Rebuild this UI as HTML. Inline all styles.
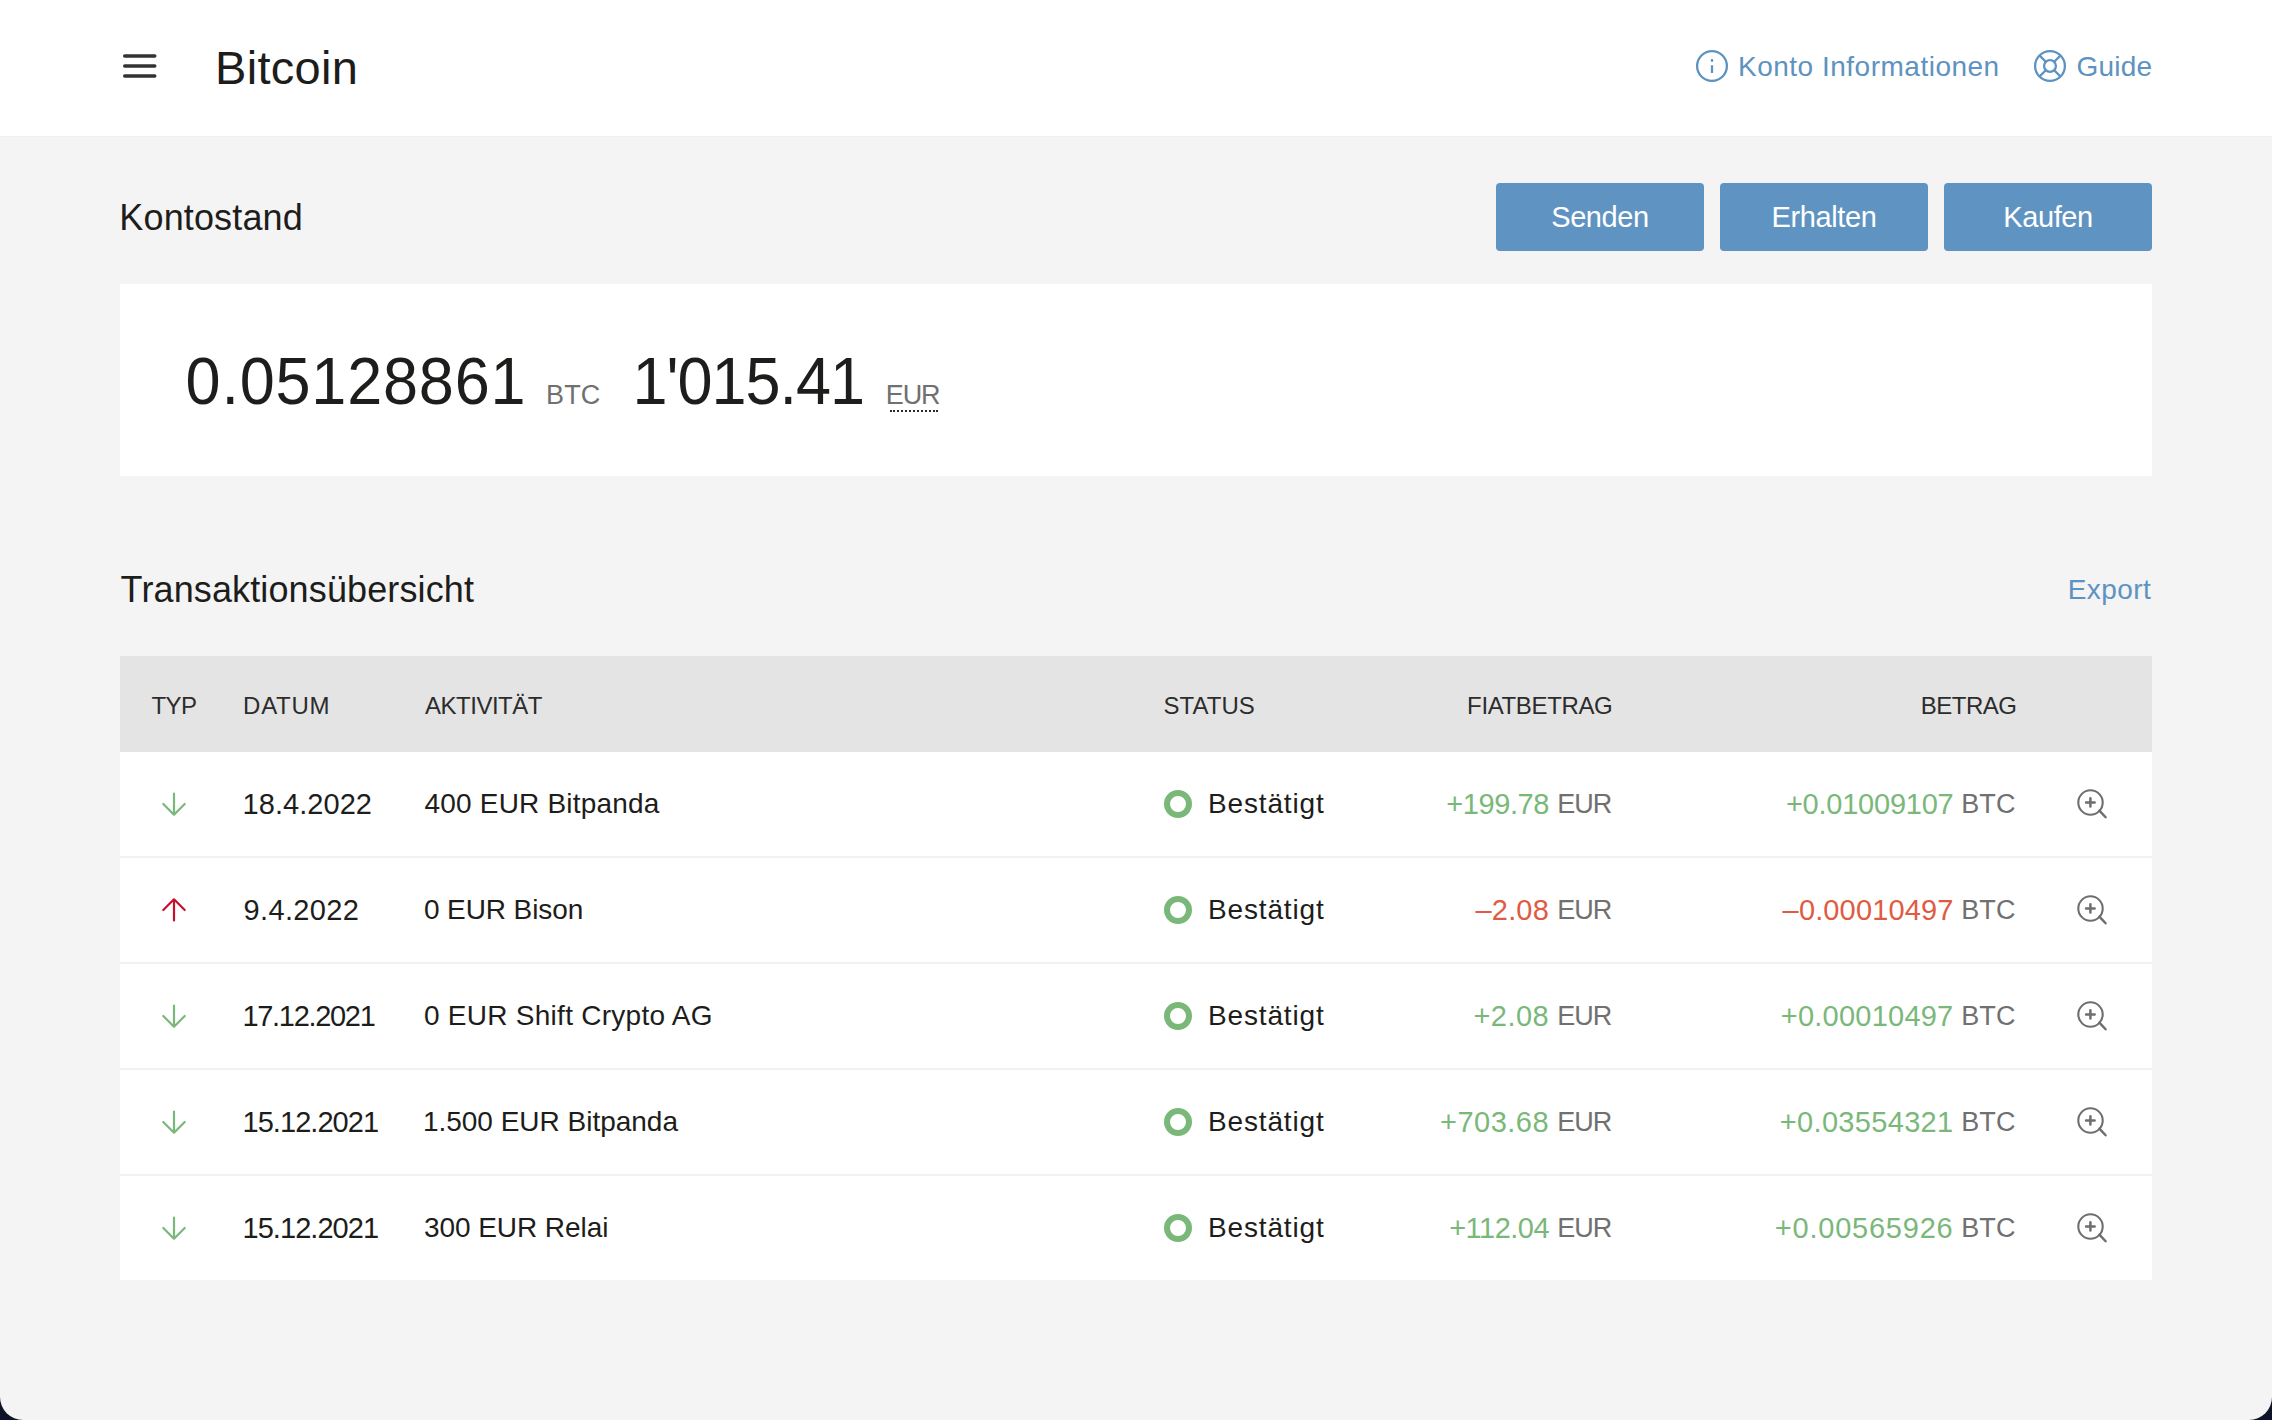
<!DOCTYPE html>
<html><head><meta charset="utf-8">
<style>
html,body{margin:0;padding:0;}
body{width:2272px;height:1420px;position:relative;overflow:hidden;background:#0e1427;font-family:"Liberation Sans",sans-serif;color:#1d1d1b;}
#win{position:absolute;left:0;top:0;width:2272px;height:1420px;background:#f4f4f4;border-radius:0 0 23px 23px;overflow:hidden;}
#hdr{position:absolute;left:0;top:0;width:2272px;height:136px;background:#fff;border-bottom:1px solid #efefef;}
.t{position:absolute;white-space:nowrap;line-height:1;}
.blue{color:#5e92c0;}
.btn{position:absolute;top:183px;width:208px;height:68px;background:#5f94c2;border-radius:4px;}
#card{position:absolute;left:120px;top:284px;width:2032px;height:192px;background:#fff;}
#thead{position:absolute;left:120px;top:656px;width:2032px;height:96px;background:#e4e4e4;}
.row{position:absolute;left:120px;width:2032px;height:104px;background:#fff;border-bottom:2px solid #f2f2f2;}
.row.last{border-bottom:none;}
.th{position:absolute;font-size:24px;color:#2c2c2c;line-height:1;white-space:nowrap;}
.cell{position:absolute;font-size:28px;line-height:1;white-space:nowrap;}
.num{position:absolute;font-size:28px;line-height:1;white-space:nowrap;}
.unit{position:absolute;font-size:27px;letter-spacing:-1px;line-height:1;white-space:nowrap;color:#707070;}
.g{color:#7ab87a;}
.r{color:#df5b43;}
</style></head><body>
<div id="win">
<div id="hdr">
<svg style="position:absolute;left:120px;top:50px" width="40" height="32" viewBox="0 0 40 32">
<g stroke="#333" stroke-width="3.4" stroke-linecap="round"><line x1="4.7" y1="6" x2="34.8" y2="6"/><line x1="4.7" y1="16" x2="34.8" y2="16"/><line x1="4.7" y1="26" x2="34.8" y2="26"/></g></svg>
<div class="t" style="left:215px;top:44px;font-size:47px;letter-spacing:0.3px;">Bitcoin</div>
<svg style="position:absolute;left:1694px;top:48px" width="36" height="36" viewBox="0 0 36 36">
<circle cx="18" cy="18" r="14.9" fill="none" stroke="#5e92c0" stroke-width="2.3"/>
<rect x="16.85" y="11.1" width="2.3" height="2.7" rx="0.6" fill="#5e92c0"/>
<rect x="16.85" y="17.2" width="2.3" height="7.7" rx="0.3" fill="#5e92c0"/></svg>
<div class="t blue" style="left:1738px;top:53px;font-size:28px;letter-spacing:0.5px;">Konto Informationen</div>
<svg style="position:absolute;left:2032px;top:48px" width="36" height="36" viewBox="0 0 36 36">
<g fill="none" stroke="#5e92c0" stroke-width="2.3"><circle cx="18" cy="18" r="14.9"/><circle cx="18" cy="18" r="5.9"/>
<path d="M7.4 7.4L13.8 13.8M28.6 7.4L22.2 13.8M7.4 28.6L13.8 22.2M28.6 28.6L22.2 22.2"/></g></svg>
<div class="t blue" style="left:2076.5px;top:53px;font-size:28px;letter-spacing:0.2px;">Guide</div>
</div>
<div class="t" style="left:119.3px;top:200px;font-size:36px;letter-spacing:0.15px;">Kontostand</div>
<div class="btn" style="left:1496px;"></div>
<div class="t" style="left:1496px;width:208px;text-align:center;top:203px;font-size:29px;color:#fff;letter-spacing:-0.4px;">Senden</div>
<div class="btn" style="left:1720px;"></div>
<div class="t" style="left:1720px;width:208px;text-align:center;top:203px;font-size:29px;color:#fff;letter-spacing:-0.4px;">Erhalten</div>
<div class="btn" style="left:1944px;"></div>
<div class="t" style="left:1944px;width:208px;text-align:center;top:203px;font-size:29px;color:#fff;letter-spacing:-0.4px;">Kaufen</div>
<div id="card"></div>
<div class="t" style="left:185.6px;top:351px;font-size:63px;letter-spacing:0.79px;transform:scaleY(1.06);transform-origin:0 53.3px;">0.05128861</div>
<div class="t" style="left:546px;top:382px;font-size:27px;letter-spacing:0.15px;color:#707070;">BTC</div>
<div class="t" style="left:632.4px;top:351px;font-size:63px;letter-spacing:-1.03px;transform:scaleY(1.06);transform-origin:0 53.3px;">1'015.41</div>
<div class="t" style="left:885.8px;top:382px;font-size:27px;letter-spacing:-1.1px;color:#707070;">EUR</div>
<div style="position:absolute;left:890px;top:410px;width:48px;height:0;border-top:2.5px dotted #2a2a2a;"></div>
<div class="t" style="left:120.6px;top:572px;font-size:36px;letter-spacing:0.13px;">Transaktionsübersicht</div>
<div class="t blue" style="left:2067.7px;top:576px;font-size:28px;letter-spacing:0.45px;">Export</div>
<div id="thead"></div>
<div class="th" style="left:151.5px;top:694px;letter-spacing:-0.55px;">TYP</div>
<div class="th" style="left:243.1px;top:694px;letter-spacing:0.7px;">DATUM</div>
<div class="th" style="left:425px;top:694px;letter-spacing:-0.49px;">AKTIVITÄT</div>
<div class="th" style="left:1163.5px;top:694px;letter-spacing:0.04px;">STATUS</div>
<div class="th" style="left:1467.1px;top:694px;letter-spacing:-0.36px;">FIATBETRAG</div>
<div class="th" style="left:1920.8px;top:694px;letter-spacing:-0.52px;">BETRAG</div>
<div class="row" style="top:752px"></div>
<svg style="position:absolute;left:158px;top:788px" width="32" height="32" viewBox="0 0 32 32"><path d="M16 5.5V26.5M5.3 16L16 26.7L26.7 16" fill="none" stroke="#7ab87a" stroke-width="2.2" stroke-linecap="round" stroke-linejoin="round"/></svg>
<div class="cell" style="left:242.5px;top:790px;font-size:29px;letter-spacing:0.06px">18.4.2022</div>
<div class="cell" style="left:424.5px;top:790px;letter-spacing:0.2px">400 EUR Bitpanda</div>
<svg style="position:absolute;left:1162px;top:788px" width="32" height="32" viewBox="0 0 32 32"><circle cx="16" cy="16" r="11" fill="none" stroke="#7ab87a" stroke-width="6"/></svg>
<div class="cell" style="left:1208px;top:790px;letter-spacing:0.84px">Bestätigt</div>
<div class="num g" style="right:723px;top:790px;font-size:29px;letter-spacing:-0.4px;">+199.78</div>
<div class="unit" style="left:1557.3px;top:791px;">EUR</div>
<div class="num g" style="right:318.5px;top:790px;font-size:29px;letter-spacing:-0.23px;">+0.01009107</div>
<div class="unit" style="left:1961.2px;top:791px;letter-spacing:0.15px;">BTC</div>
<svg style="position:absolute;left:2072px;top:788px" width="40" height="40" viewBox="0 0 40 40"><g fill="none" stroke="#6e6e6e" stroke-linecap="round"><circle cx="18.5" cy="14.5" r="12.2" stroke-width="2.1"/><path d="M18.4 10.15V18.55M14.05 14.4H22.65" stroke-width="2.5"/><path d="M27.4 22.6L33.6 29.3" stroke-width="2.4"/></g></svg>
<div class="row" style="top:858px"></div>
<svg style="position:absolute;left:158px;top:894px" width="32" height="32" viewBox="0 0 32 32"><path d="M16 26.5V5.5M5.3 16L16 5.3L26.7 16" fill="none" stroke="#c8102e" stroke-width="2.2" stroke-linecap="round" stroke-linejoin="round"/></svg>
<div class="cell" style="left:243.5px;top:896px;font-size:29px;letter-spacing:0.37px">9.4.2022</div>
<div class="cell" style="left:423.9px;top:896px;letter-spacing:-0.09px">0 EUR Bison</div>
<svg style="position:absolute;left:1162px;top:894px" width="32" height="32" viewBox="0 0 32 32"><circle cx="16" cy="16" r="11" fill="none" stroke="#7ab87a" stroke-width="6"/></svg>
<div class="cell" style="left:1208px;top:896px;letter-spacing:0.84px">Bestätigt</div>
<div class="num r" style="right:723px;top:896px;font-size:29px;letter-spacing:0.18px;">–2.08</div>
<div class="unit" style="left:1557.3px;top:897px;">EUR</div>
<div class="num r" style="right:318.5px;top:896px;font-size:29px;letter-spacing:0.14px;">–0.00010497</div>
<div class="unit" style="left:1961.2px;top:897px;letter-spacing:0.15px;">BTC</div>
<svg style="position:absolute;left:2072px;top:894px" width="40" height="40" viewBox="0 0 40 40"><g fill="none" stroke="#6e6e6e" stroke-linecap="round"><circle cx="18.5" cy="14.5" r="12.2" stroke-width="2.1"/><path d="M18.4 10.15V18.55M14.05 14.4H22.65" stroke-width="2.5"/><path d="M27.4 22.6L33.6 29.3" stroke-width="2.4"/></g></svg>
<div class="row" style="top:964px"></div>
<svg style="position:absolute;left:158px;top:1000px" width="32" height="32" viewBox="0 0 32 32"><path d="M16 5.5V26.5M5.3 16L16 26.7L26.7 16" fill="none" stroke="#7ab87a" stroke-width="2.2" stroke-linecap="round" stroke-linejoin="round"/></svg>
<div class="cell" style="left:242.5px;top:1002px;font-size:29px;letter-spacing:-1.32px">17.12.2021</div>
<div class="cell" style="left:423.9px;top:1002px;letter-spacing:0.275px">0 EUR Shift Crypto AG</div>
<svg style="position:absolute;left:1162px;top:1000px" width="32" height="32" viewBox="0 0 32 32"><circle cx="16" cy="16" r="11" fill="none" stroke="#7ab87a" stroke-width="6"/></svg>
<div class="cell" style="left:1208px;top:1002px;letter-spacing:0.84px">Bestätigt</div>
<div class="num g" style="right:723px;top:1002px;font-size:29px;letter-spacing:0.43px;">+2.08</div>
<div class="unit" style="left:1557.3px;top:1003px;">EUR</div>
<div class="num g" style="right:318.5px;top:1002px;font-size:29px;letter-spacing:0.24px;">+0.00010497</div>
<div class="unit" style="left:1961.2px;top:1003px;letter-spacing:0.15px;">BTC</div>
<svg style="position:absolute;left:2072px;top:1000px" width="40" height="40" viewBox="0 0 40 40"><g fill="none" stroke="#6e6e6e" stroke-linecap="round"><circle cx="18.5" cy="14.5" r="12.2" stroke-width="2.1"/><path d="M18.4 10.15V18.55M14.05 14.4H22.65" stroke-width="2.5"/><path d="M27.4 22.6L33.6 29.3" stroke-width="2.4"/></g></svg>
<div class="row" style="top:1070px"></div>
<svg style="position:absolute;left:158px;top:1106px" width="32" height="32" viewBox="0 0 32 32"><path d="M16 5.5V26.5M5.3 16L16 26.7L26.7 16" fill="none" stroke="#7ab87a" stroke-width="2.2" stroke-linecap="round" stroke-linejoin="round"/></svg>
<div class="cell" style="left:242.5px;top:1108px;font-size:29px;letter-spacing:-0.95px">15.12.2021</div>
<div class="cell" style="left:422.9px;top:1108px;letter-spacing:-0.01px">1.500 EUR Bitpanda</div>
<svg style="position:absolute;left:1162px;top:1106px" width="32" height="32" viewBox="0 0 32 32"><circle cx="16" cy="16" r="11" fill="none" stroke="#7ab87a" stroke-width="6"/></svg>
<div class="cell" style="left:1208px;top:1108px;letter-spacing:0.84px">Bestätigt</div>
<div class="num g" style="right:723px;top:1108px;font-size:29px;letter-spacing:0.47px;">+703.68</div>
<div class="unit" style="left:1557.3px;top:1109px;">EUR</div>
<div class="num g" style="right:318.5px;top:1108px;font-size:29px;letter-spacing:0.32px;">+0.03554321</div>
<div class="unit" style="left:1961.2px;top:1109px;letter-spacing:0.15px;">BTC</div>
<svg style="position:absolute;left:2072px;top:1106px" width="40" height="40" viewBox="0 0 40 40"><g fill="none" stroke="#6e6e6e" stroke-linecap="round"><circle cx="18.5" cy="14.5" r="12.2" stroke-width="2.1"/><path d="M18.4 10.15V18.55M14.05 14.4H22.65" stroke-width="2.5"/><path d="M27.4 22.6L33.6 29.3" stroke-width="2.4"/></g></svg>
<div class="row last" style="top:1176px"></div>
<svg style="position:absolute;left:158px;top:1212px" width="32" height="32" viewBox="0 0 32 32"><path d="M16 5.5V26.5M5.3 16L16 26.7L26.7 16" fill="none" stroke="#7ab87a" stroke-width="2.2" stroke-linecap="round" stroke-linejoin="round"/></svg>
<div class="cell" style="left:242.5px;top:1214px;font-size:29px;letter-spacing:-0.95px">15.12.2021</div>
<div class="cell" style="left:423.9px;top:1214px;letter-spacing:-0.06px">300 EUR Relai</div>
<svg style="position:absolute;left:1162px;top:1212px" width="32" height="32" viewBox="0 0 32 32"><circle cx="16" cy="16" r="11" fill="none" stroke="#7ab87a" stroke-width="6"/></svg>
<div class="cell" style="left:1208px;top:1214px;letter-spacing:0.84px">Bestätigt</div>
<div class="num g" style="right:723px;top:1214px;font-size:29px;letter-spacing:-0.53px;">+112.04</div>
<div class="unit" style="left:1557.3px;top:1215px;">EUR</div>
<div class="num g" style="right:318.5px;top:1214px;font-size:29px;letter-spacing:0.78px;">+0.00565926</div>
<div class="unit" style="left:1961.2px;top:1215px;letter-spacing:0.15px;">BTC</div>
<svg style="position:absolute;left:2072px;top:1212px" width="40" height="40" viewBox="0 0 40 40"><g fill="none" stroke="#6e6e6e" stroke-linecap="round"><circle cx="18.5" cy="14.5" r="12.2" stroke-width="2.1"/><path d="M18.4 10.15V18.55M14.05 14.4H22.65" stroke-width="2.5"/><path d="M27.4 22.6L33.6 29.3" stroke-width="2.4"/></g></svg>
</div>
</body></html>
